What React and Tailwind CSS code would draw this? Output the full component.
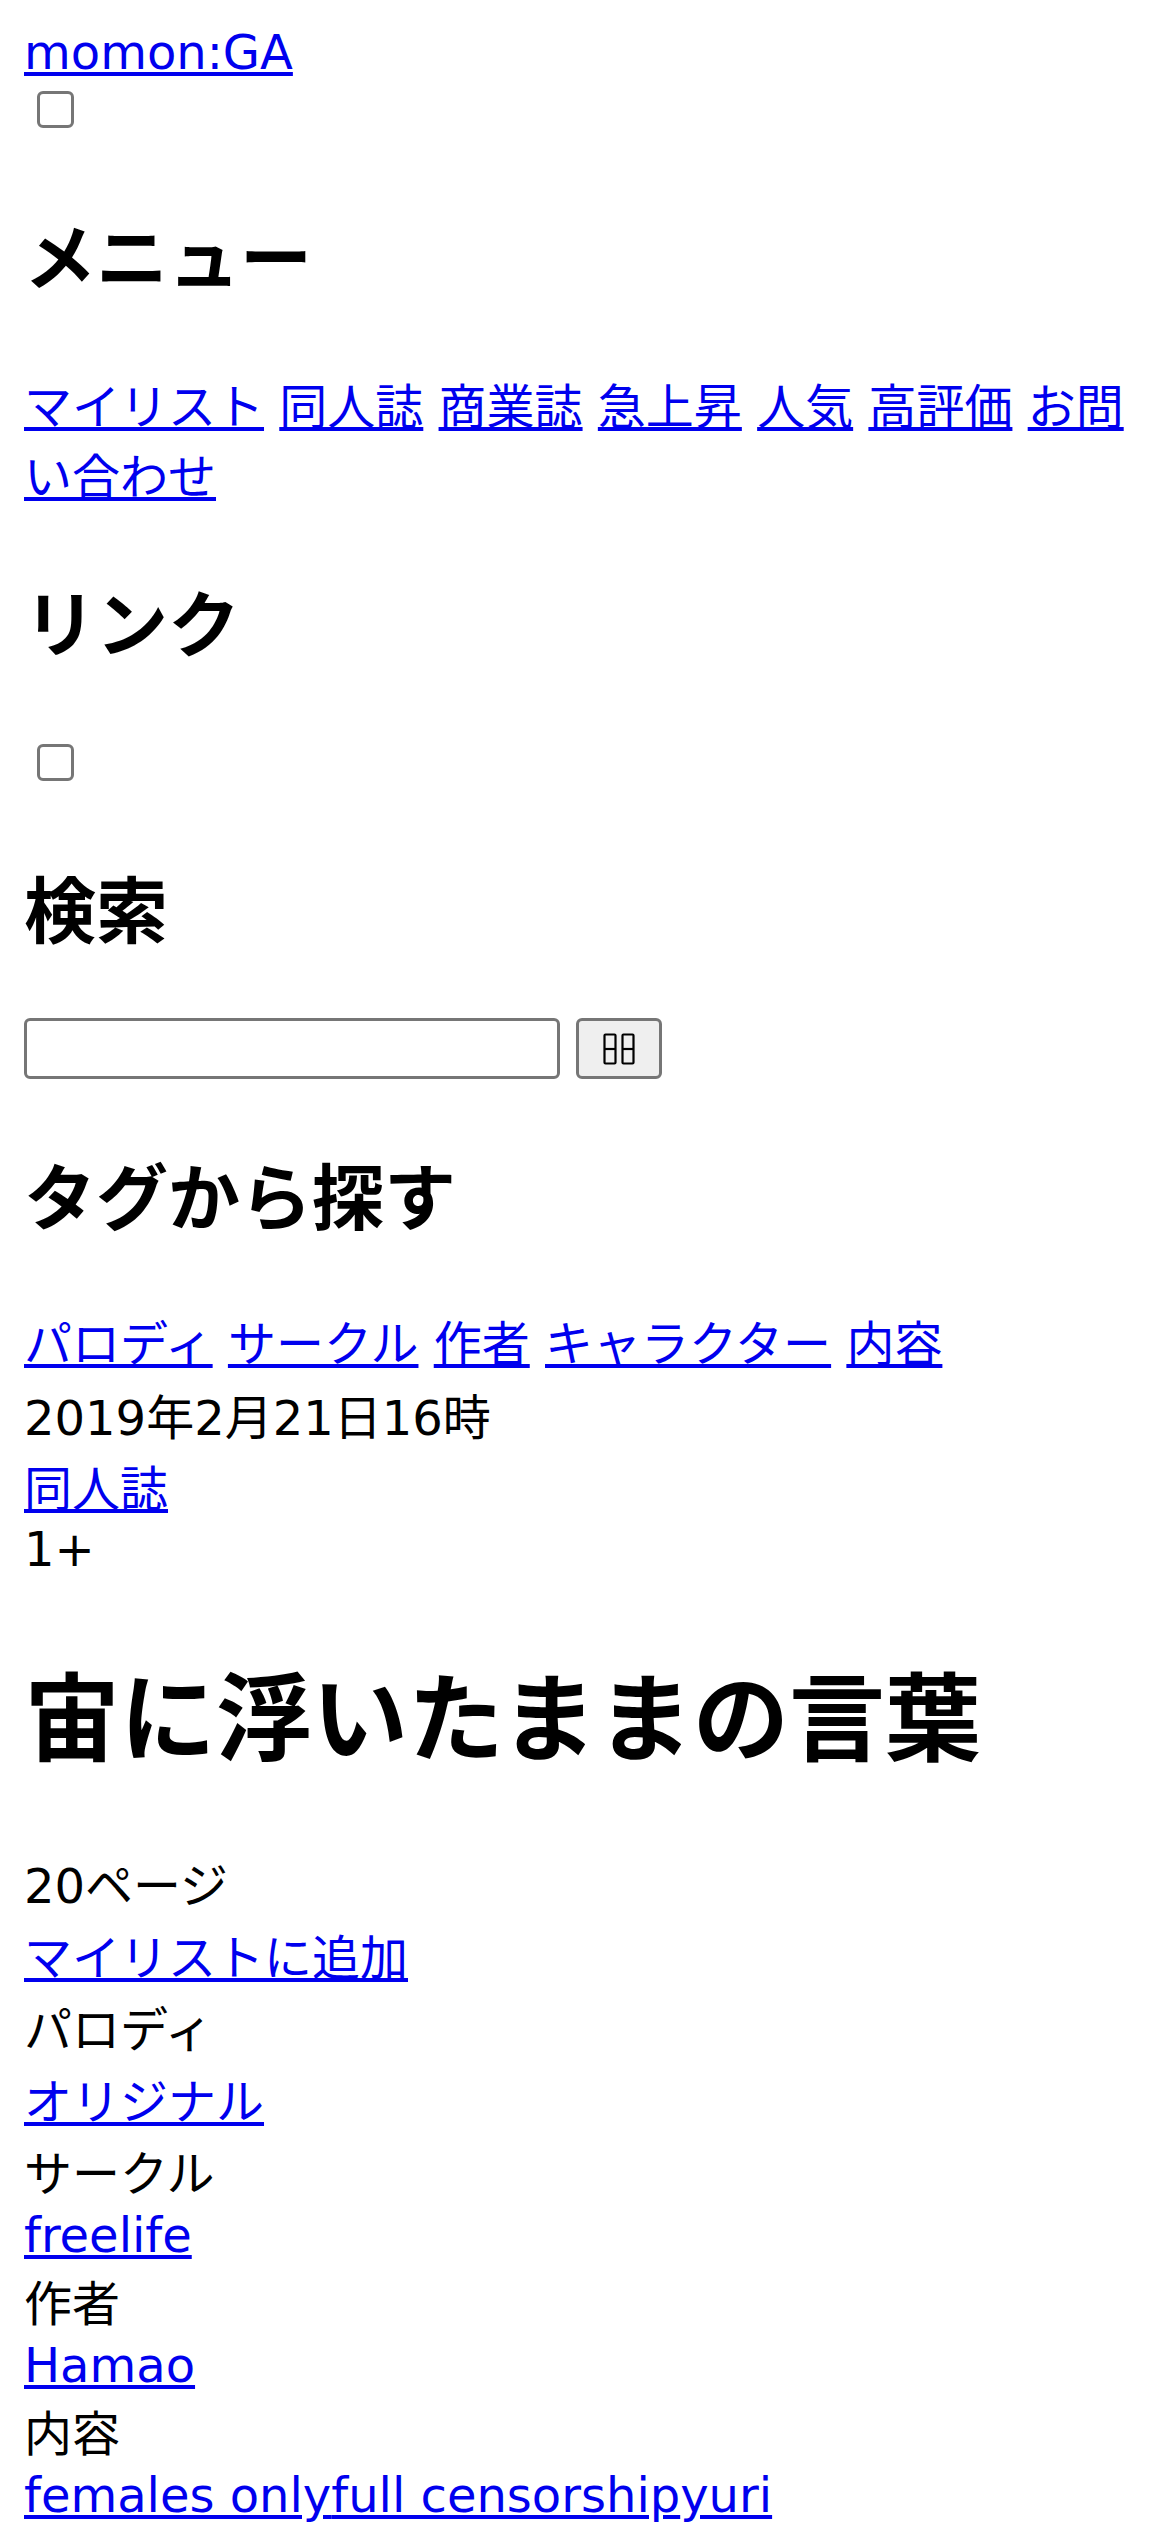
import React from "react";

const linkCls = "text-[#0000ee] underline";

const Check = () => (
  <div className="h-[49px]">
    <input
      type="checkbox"
      className="appearance-none block w-[37px] h-[37px] mt-[11px] ml-[13px] border-[3px] border-[#767676] rounded-[6px] bg-white"
    />
  </div>
);

const H2 = ({ children, className = "my-[60px]" }) => (
  <h2 className={`text-[72px] font-bold ${className}`}>{children}</h2>
);

// rows holding Japanese text are a little taller than latin-only rows
const CRow = ({ children }) => <div className="h-[72px]">{children}</div>;
const LRow = ({ children }) => <div className="h-[58px]">{children}</div>;

const L = ({ children }) => (
  <a href="#" className={linkCls}>
    {children}
  </a>
);

export default function App() {
  const menu = ["マイリスト", "同人誌", "商業誌", "急上昇", "人気", "高評価", "お問い合わせ"];
  const tags = ["パロディ", "サークル", "作者", "キャラクター", "内容"];

  return (
    <div className="min-h-screen bg-white p-[24px] text-black text-[48px] leading-[normal] font-['DejaVu_Sans','Noto_Sans_CJK_JP',sans-serif]">
      <header>
        <div>
          <L>momon:GA</L>
        </div>
        <Check />
        <nav>
          <H2 className="mt-[60px] mb-[63px]">メニュー</H2>
          <div>
            {menu.map((m, i) => (
              <React.Fragment key={m}>
                <L>{m}</L>
                {i < menu.length - 1 ? " " : ""}
              </React.Fragment>
            ))}
          </div>
          <H2 className="mt-[59px] mb-[72px]">リンク</H2>
        </nav>
        <Check />
        <H2>検索</H2>
        <form className="flex items-start h-[62px]" onSubmit={(e) => e.preventDefault()}>
          <input
            type="text"
            className="w-[536px] h-[61px] border-[3px] border-[#767676] rounded-[6px] bg-white px-[6px] text-[40px]"
          />
          <button
            type="submit"
            className="ml-[16px] w-[86px] h-[61px] border-[3px] border-[#767676] rounded-[6px] bg-[#efefef] flex items-center justify-center"
          >
            <svg width="32" height="32" viewBox="0 0 32 32" fill="none" stroke="#000" strokeWidth="2.2">
              <rect x="1.5" y="1.5" width="11" height="29" rx="1" />
              <line x1="1.5" y1="16" x2="12.5" y2="16" />
              <rect x="19.5" y="1.5" width="11" height="29" rx="1" />
              <line x1="19.5" y1="16" x2="30.5" y2="16" />
            </svg>
          </button>
        </form>
        <H2>タグから探す</H2>
        <div className="h-[74px]">
          {tags.map((t, i) => (
            <React.Fragment key={t}>
              <L>{t}</L>
              {i < tags.length - 1 ? " " : ""}
            </React.Fragment>
          ))}
        </div>
      </header>

      <main>
        <div className="h-[71px]">2019年2月21日16時</div>
        <div className="h-[71px]">
          <L>同人誌</L>
        </div>
        <LRow>1+</LRow>
        <h1 className="text-[96px] font-bold mt-[63px] mb-[66px]">宙に浮いたままの言葉</h1>
        <CRow>20ページ</CRow>
        <CRow>
          <L>マイリストに追加</L>
        </CRow>
        <CRow>パロディ</CRow>
        <CRow>
          <L>オリジナル</L>
        </CRow>
        <CRow>サークル</CRow>
        <LRow>
          <L>freelife</L>
        </LRow>
        <CRow>作者</CRow>
        <LRow>
          <L>Hamao</L>
        </LRow>
        <CRow>内容</CRow>
        <LRow>
          <L>females only</L>
          <L>full censorship</L>
          <L>yuri</L>
        </LRow>
      </main>
    </div>
  );
}
